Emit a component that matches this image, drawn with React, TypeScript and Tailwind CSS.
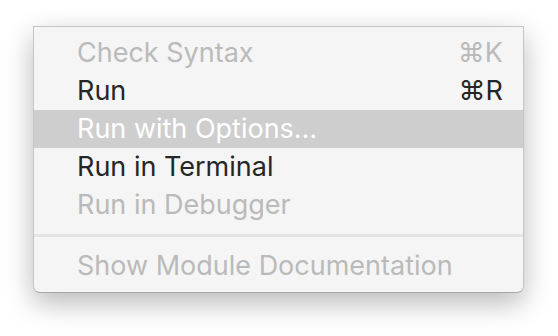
import React from "react";

type Item = { label: string; shortcut?: string; disabled?: boolean; highlighted?: boolean };

const items: Item[] = [
  { label: "Check Syntax", shortcut: "⌘K", disabled: true },
  { label: "Run", shortcut: "⌘R" },
  { label: "Run with Options…", highlighted: true },
  { label: "Run in Terminal" },
  { label: "Run in Debugger", disabled: true },
];

function Row({ item }: { item: Item }) {
  const color = item.highlighted
    ? "text-white"
    : item.disabled
    ? "text-[#bababa]"
    : "text-[#262626]";
  return (
    <div
      className={`flex h-[38px] items-center justify-between pl-[43px] pr-[20px] ${
        item.highlighted ? "bg-[#cecece]" : ""
      } ${color}`}
    >
      <span className="leading-none pb-[2px]">{item.label}</span>
      {item.shortcut && <span className="leading-none pb-[2px]">{item.shortcut}</span>}
    </div>
  );
}

export default function App() {
  return (
    <div className="w-[558px] h-[336px] bg-white pt-[26px] pl-[33px]">
      <div
        className="w-[491px] bg-[#f5f5f5] border border-[#c4c4c4] border-b-[#a8a8a8] rounded-b-[7px] pt-[7px] pb-[7px] shadow-[0_10px_28px_rgba(0,0,0,0.28)] text-[27px]"
        style={{ fontFamily: 'Inter, "DejaVu Sans", sans-serif' }}
      >
        {items.map((it) => (
          <Row key={it.label} item={it} />
        ))}
        <div className="h-[23px] flex items-center">
          <div className="h-[3px] w-full bg-[#e4e4e4]" />
        </div>
        <Row item={{ label: "Show Module Documentation", disabled: true }} />
      </div>
    </div>
  );
}
